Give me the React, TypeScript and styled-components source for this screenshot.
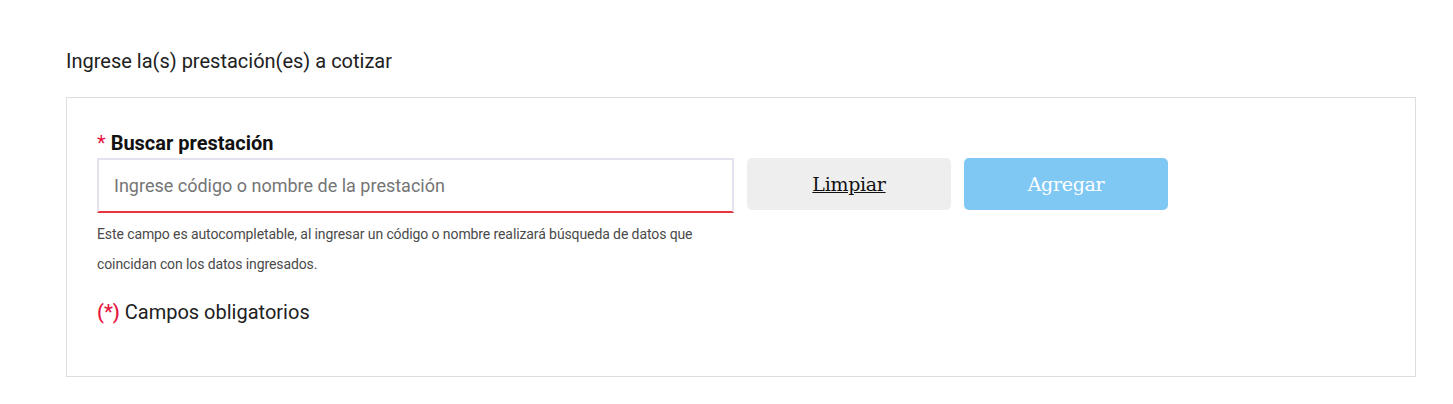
import React from 'react';
import styled, { createGlobalStyle } from 'styled-components';

const GlobalStyle = createGlobalStyle`
  body {
    margin: 0;
    background: #fff;
    font-family: Roboto, 'Noto Sans', sans-serif;
  }
`;

const Page = styled.div`
  padding: 49px 37px 0 66px;
`;

const Title = styled.h2`
  margin: 0 0 23px;
  font-size: 20px;
  font-weight: 400;
  line-height: 25px;
  color: #212121;
`;

const Card = styled.section`
  border: 1px solid #dedede;
  padding: 33px 30px 0;
  height: 280px;
  box-sizing: border-box;
`;

const Label = styled.label`
  display: block;
  font-size: 20px;
  font-weight: 700;
  line-height: 24px;
  color: #111;
  margin-bottom: 3px;
`;

const Required = styled.span`
  color: #e8173f;
  font-weight: 400;
  margin-right: 5px;
`;

const Row = styled.div`
  display: flex;
  align-items: flex-start;
  gap: 13px;
`;

const Field = styled.div`
  width: 637px;
`;

const Input = styled.input`
  box-sizing: border-box;
  width: 100%;
  height: 55px;
  padding: 0 15px;
  border: 2px solid #e3e3ef;
  border-bottom: 2px solid #e5343d;
  font-family: Roboto, sans-serif;
  font-size: 18px;
  color: #333;
  outline: none;
  &::placeholder {
    color: #757575;
  }
`;

const Help = styled.p`
  margin: 6px 0 0;
  font-size: 14px;
  letter-spacing: -0.1px;
  line-height: 30px;
  color: #4a4a4a;
`;

const Button = styled.button<{ $primary?: boolean }>`
  width: 204px;
  height: 52px;
  border: none;
  border-radius: 5px;
  font-family: 'DejaVu Serif', 'Liberation Serif', serif;
  font-size: 19px;
  letter-spacing: -0.3px;
  background: ${(p) => (p.$primary ? '#80c8f4' : '#eeeeee')};
  color: ${(p) => (p.$primary ? '#ffffff' : '#111111')};
  text-decoration: ${(p) => (p.$primary ? 'none' : 'underline')};
  cursor: pointer;
`;

const Note = styled.p`
  margin: 21px 0 0;
  font-size: 20px;
  line-height: 24px;
  color: #212121;
`;

const NoteMark = styled.span`
  color: #e8173f;
  font-weight: 500;
`;

export default function App() {
  return (
    <>
      <GlobalStyle />
      <Page>
        <Title>Ingrese la(s) prestación(es) a cotizar</Title>
        <Card>
          <Label>
            <Required>*</Required>Buscar prestación
          </Label>
          <Row>
            <Field>
              <Input placeholder="Ingrese código o nombre de la prestación" />
              <Help>
                Este campo es autocompletable, al ingresar un código o nombre realizará búsqueda de datos
                que coincidan con los datos ingresados.
              </Help>
            </Field>
            <Button>Limpiar</Button>
            <Button $primary>Agregar</Button>
          </Row>
          <Note>
            <NoteMark>(*)</NoteMark> Campos obligatorios
          </Note>
        </Card>
      </Page>
    </>
  );
}
